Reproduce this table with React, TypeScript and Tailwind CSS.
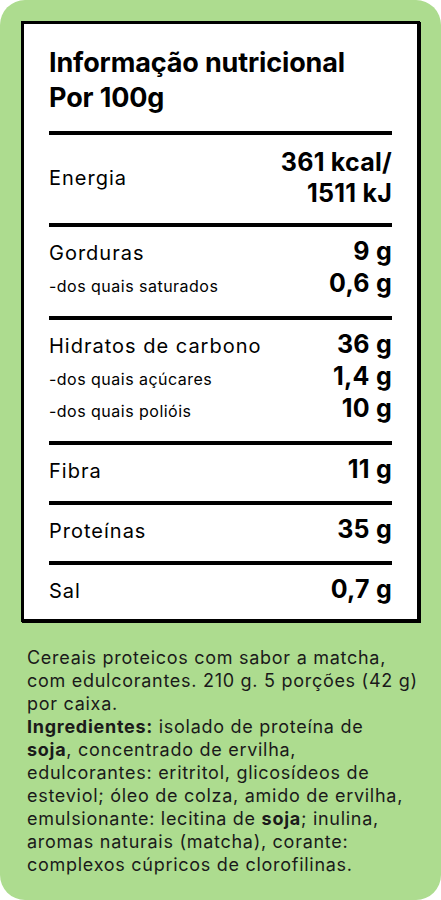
import React from "react";

const font = { fontFamily: "Inter, 'Noto Sans', sans-serif" };

function Row({ label, value, sub }: { label: string; value: string; sub?: boolean }) {
  return (
    <div className="flex items-baseline justify-between h-[32px]">
      <span
        className={
          sub
            ? "text-[16px] leading-[28px] tracking-[0.03em]"
            : "text-[20px] leading-[28px] tracking-[0.05em]"
        }
      >
        {label}
      </span>
      <span className="text-[25px] leading-[32px] font-bold tracking-[0.01em]">{value}</span>
    </div>
  );
}

export default function App() {
  return (
    <div className="w-[441px] h-[900px] bg-white" style={font}>
      <div className="w-[441px] h-[900px] bg-[#addc8f] rounded-[25px] pt-[21px] flex flex-col text-black">
        <div className="mx-[21px] bg-white border-[3px] border-black shadow-[1px_1px_0_#000] px-[25px]">
          <div className="pt-[21px] pb-[16px] text-[27px] leading-[35px] font-bold tracking-[-0.005em]">
            <div>Informação nutricional</div>
            <div>Por 100g</div>
          </div>
          <div className="border-t-4 border-black pt-[12px] pb-[14px] flex items-center justify-between">
            <span className="text-[20px] leading-[28px] tracking-[0.05em]">Energia</span>
            <div className="text-right text-[25px] leading-[31px] font-bold tracking-[0.01em]">
              <div>361 kcal/</div>
              <div>1511 kJ</div>
            </div>
          </div>
          <div className="border-t-4 border-black pt-[8px] pb-[17px]">
            <Row label="Gorduras" value="9 g" />
            <Row label="-dos quais saturados" value="0,6 g" sub />
          </div>
          <div className="border-t-4 border-black pt-[8px] pb-[17px]">
            <Row label="Hidratos de carbono" value="36 g" />
            <Row label="-dos quais açúcares" value="1,4 g" sub />
            <Row label="-dos quais polióis" value="10 g" sub />
          </div>
          <div className="border-t-4 border-black pt-[8px] pb-[16px]">
            <Row label="Fibra" value="11 g" />
          </div>
          <div className="border-t-4 border-black pt-[8px] pb-[16px]">
            <Row label="Proteínas" value="35 g" />
          </div>
          <div className="border-t-4 border-black pt-[8px] pb-[14px]">
            <Row label="Sal" value="0,7 g" />
          </div>
        </div>
        <div className="mt-[24px] px-[27px] text-[18px] leading-[23px] tracking-[0.04em] text-[#1a1a1a] whitespace-nowrap">
          <div>Cereais proteicos com sabor a matcha,</div>
          <div>com edulcorantes. 210 g. 5 porções (42 g)</div>
          <div>por caixa.</div>
          <div><b className="font-bold">Ingredientes:</b> isolado de proteína de</div>
          <div><b className="font-bold">soja</b>, concentrado de ervilha,</div>
          <div>edulcorantes: eritritol, glicosídeos de</div>
          <div>esteviol; óleo de colza, amido de ervilha,</div>
          <div>emulsionante: lecitina de <b className="font-bold">soja</b>; inulina,</div>
          <div>aromas naturais (matcha), corante:</div>
          <div>complexos cúpricos de clorofilinas.</div>
        </div>
      </div>
    </div>
  );
}
